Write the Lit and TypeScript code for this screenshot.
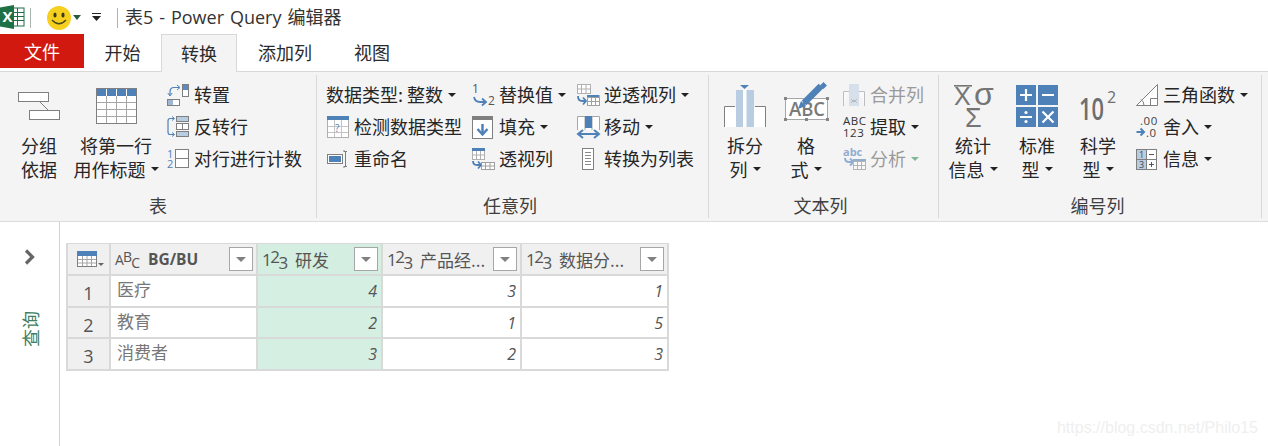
import { LitElement, html, css, svg } from "lit";
import { customElement } from "lit/decorators.js";

const B = "#4e81b8";
const LB = "#b9cde2";
const G = "#7f7f7f";
const ic = (w: number, h: number, body: unknown) =>
  html`<svg width=${w} height=${h} viewBox="0 0 ${w} ${h}">${body}</svg>`;

const icons = {
  group: ic(42, 28, svg`<g fill="#fff" stroke="${G}"><rect x=".5" y=".5" width="30" height="9"/><rect x="11.500" y="18.500" width="30" height="9"/></g><path d="M22 10l8 8" stroke="${G}"/>`),
  table: ic(41, 36, svg`<rect x=".5" y=".5" width="40" height="35" fill="#fff" stroke="${G}"/><rect x="1" y="1" width="39" height="7" fill="${B}"/><path d="M10.500 1v34M20.500 1v34M30.500 1v34M1 14.500h39M1 21.500h39M1 28.500h39" stroke="#a6a6a6" fill="none"/><path d="M10.500 1v7M20.500 1v7M30.500 1v7" stroke="#fff"/>`),
  transpose: ic(22, 22, svg`<rect x="15.500" y=".5" width="6" height="12" fill="#fff" stroke="${G}"/><rect x="16" y="1" width="5" height="5" fill="#5d8bbd"/><rect x=".5" y="15.500" width="12" height="6" fill="#fff" stroke="${G}"/><rect x="1" y="16" width="5" height="5" fill="#9cb6d3"/><path d="M12 3.500H7Q3 3.500 3 8v3" fill="none" stroke="${B}" stroke-width="1.200"/><path d="M10 1l3 2.500-3 2.500M.8 9l2.200 3 2.200-3" fill="none" stroke="${B}"/>`),
  flip: ic(22, 22, svg`<rect x="9.500" y=".5" width="12" height="5" fill="${LB}" stroke="${G}"/><rect x="9.500" y="7.500" width="12" height="6" fill="#fff" stroke="${G}"/><path d="M15.500 7.500v6" stroke="${G}"/><rect x="9.500" y="15.500" width="12" height="5" fill="${LB}" stroke="${G}"/><path d="M7 2.500H3Q1 2.500 1 5v11q0 2.500 2 2.500h4" fill="none" stroke="${B}" stroke-width="1.200"/><path d="M5 .5l2.500 2-2.500 2M5 16.500l2.500 2-2.500 2" fill="none" stroke="${B}"/>`),
  count: ic(22, 20, svg`<text x="0" y="9" class="s" fill="${B}">1</text><text x="0" y="19" class="s" fill="${B}">2</text><rect x="8.500" y=".5" width="13" height="18" fill="#fff" stroke="${G}"/><path d="M8.500 9.500h13" stroke="${G}"/>`),
  detect: ic(22, 22, svg`<rect x=".5" y=".5" width="21" height="21" fill="#fff" stroke="#b0b0b0"/><rect width="22" height="4" fill="${B}"/><path d="M7.500 4v17M14.500 4v17M1 10.500h20M1 16.500h20" stroke="#c4c4c4"/><text x="8" y="16" class="s q" fill="${B}">?</text>`),
  rename: ic(21, 18, svg`<rect x=".5" y="4.500" width="15" height="9" fill="#fff" stroke="${G}"/><rect x="2" y="6" width="12" height="6" fill="${B}"/><path d="M17 1.500h3M18.500 1.500v15M17 16.500h3" stroke="${G}" fill="none"/><path d="M16 1h2M16 17h2" stroke="${G}"/>`),
  replace: ic(23, 22, svg`<text x="0" y="9" class="m" fill="#555">1</text><text x="16" y="21" class="m" fill="#555">2</text><path d="M2 13q1 5 6 5h5" fill="none" stroke="${B}" stroke-width="1.800"/><path d="M10 14.500l4 3.500-4 3.500" fill="none" stroke="${B}" stroke-width="1.800"/>`),
  fill: ic(21, 23, svg`<rect x=".5" y="2" width="20" height="20.500" fill="#fff" stroke="${G}"/><rect width="21" height="4" fill="${G}"/><path d="M10.500 8v10" stroke="${B}" stroke-width="2.500"/><path d="M5.500 13l5 5.500 5-5.500" fill="none" stroke="${B}" stroke-width="2.500"/>`),
  unpivot: ic(23, 22, svg`<g stroke="#b0b0b0" fill="#fff"><rect x=".5" y=".5" width="13" height="9"/><path d="M4.500 .5v9M9 .5v9M.5 5h13" fill="none"/></g><rect x="10" y="11" width="12.500" height="3" fill="${B}"/><g stroke="#a0a0a0" fill="#fff"><rect x="10.500" y="13.500" width="12" height="8"/><path d="M14.500 13.500v8M18.500 13.500v8M10.500 17.500h12" fill="none"/></g><path d="M1 12q0 5 4 5h3" fill="none" stroke="${B}" stroke-width="1.800"/><path d="M6 13.500l3 3.500-3 3.500" fill="none" stroke="${B}" stroke-width="1.800"/>`),
  pivot: ic(23, 22, svg`<g stroke="#b0b0b0" fill="#fff"><rect x=".5" y=".5" width="12" height="11"/><path d="M4.500 3v9M8.500 3v9M.5 7h12" fill="none"/></g><rect x="0" y="0" width="13" height="3" fill="${B}"/><g stroke="#a0a0a0" fill="#fff"><rect x="9.500" y="14.500" width="13" height="7"/><path d="M13.500 14.500v7M18 14.500v7M9.500 18h13" fill="none"/></g><path d="M1 13q0 4 4 4h3" fill="none" stroke="${B}" stroke-width="1.800"/><path d="M6 13.500l3 3.500-3 3.500" fill="none" stroke="${B}" stroke-width="1.800"/>`),
  move: ic(23, 22, svg`<path d="M.5 14V.5h22V14" fill="#fff" stroke="#a6a6a6"/><path d="M8 .5V14M15 .5V14" stroke="#a6a6a6"/><rect x="8" width="7" height="12" fill="${B}"/><path d="M2 18h19" stroke="${B}" stroke-width="2"/><path d="M6 14l-5 4 5 4M17 14l5 4-5 4" fill="none" stroke="${B}" stroke-width="2"/>`),
  list: ic(22, 22, svg`<rect x="5.500" y=".5" width="11" height="21" fill="#fff" stroke="${G}"/><path d="M8 4.500h6M8 7.500h6M8 10.500h6M8 13.500h6M8 16.500h6" stroke="#8a8a8a"/>`),
  split: ic(42, 42, svg`<path d="M.5 42V21.500H11M31 21.500h10.500V42" fill="#fff" stroke="${G}"/><rect x="1" y="22" width="11" height="20" fill="#fff"/><rect x="30" y="22" width="11" height="20" fill="#fff"/><rect x="12" y="5" width="18" height="37" fill="${LB}"/><rect x="19" y="5" width="3.500" height="37" fill="#fff"/><path d="M16 0h9l-4.500 4z" fill="${B}"/>`),
  format: ic(45, 46, svg`<rect x="1.500" y="15.500" width="42" height="21" fill="#fff" stroke="#a6a6a6"/><g fill="#858585"><rect y="14" width="3" height="3"/><rect x="42" y="14" width="3" height="3"/><rect y="35" width="3" height="3"/><rect x="42" y="35" width="3" height="3"/><rect x="21" y="35" width="3" height="3"/></g><text x="5" y="33" class="abc" textLength="36" lengthAdjust="spacingAndGlyphs">ABC</text><path d="M20 20L37 3" stroke="${B}" stroke-width="6.500"/><path d="M39.500 .5l2 2-2 2-2-2z" fill="${B}" stroke="${B}" stroke-width="2"/><path d="M14 26l3-8 5 5z" fill="${B}"/>`),
  merge: ic(22, 22, svg`<g opacity=".5"><path d="M.5 22V7.500H6M16 7.500h5.500V22" fill="#fff" stroke="#8a8a8a"/><rect x="6" y="0" width="10" height="22" fill="${LB}"/><path d="M8 15l3 3 3-3M8 19l3-3 3 3" fill="none" stroke="#7f7f7f"/></g>`),
  extract: ic(22, 24, svg`<text x="0" y="10" class="x">ABC</text><text x="0" y="22" class="x">123</text>`),
  parse: ic(23, 24, svg`<g opacity=".6"><text x="0" y="9" class="p" fill="${B}">abc</text><path d="M2 11q0 4 4 4h3" fill="none" stroke="${B}" stroke-width="2"/><path d="M7 11.500l3.500 3.500-3.500 3.500" fill="none" stroke="${B}" stroke-width="2"/><rect x="10" y="12" width="13" height="3" fill="${B}"/><g fill="#fff" stroke="#8a8a8a"><rect x="10.500" y="14.500" width="12" height="8"/><path d="M14.500 14.500v8M18.500 14.500v8M10.500 18.500h12" fill="none"/></g></g>`),
  stats: ic(40, 42, svg`<path d="M1 .8h18" stroke="#757575" stroke-width="1.600"/><text x="1" y="20" class="st">X</text><text x="21" y="20" class="sig">σ</text><text x="12" y="42" class="sg">Σ</text>`),
  std: ic(42, 42, svg`<rect width="20" height="20" fill="${B}"/><rect x="22" width="20" height="20" fill="${B}"/><rect y="22" width="20" height="20" fill="${B}"/><rect x="22" y="22" width="20" height="20" fill="${B}"/><g stroke="#fff" stroke-width="2.200"><path d="M4 10h12M10 4v12M26 10h12M4 32h12"/><path d="M26.500 26.500l11 11M37.500 26.500l-11 11"/></g><circle cx="10" cy="27.500" r="1.600" fill="#fff"/><circle cx="10" cy="36.500" r="1.600" fill="#fff"/>`),
  sci: ic(38, 30, svg`<text x="0" y="29" class="ten" textLength="25" lengthAdjust="spacingAndGlyphs">10</text><text x="28" y="12" class="two">2</text>`),
  trig: ic(22, 22, svg`<path d="M.5 21.500L21.500 .5v21z" fill="#fff" stroke="${G}"/><path d="M14.500 21.500v-7h7M8 21.500q0-4-3-6" fill="none" stroke="${G}"/>`),
  round: ic(22, 22, svg`<text x="4" y="9" class="r">.00</text><text x="10" y="21" class="r">.0</text><path d="M.5 16h7" stroke="${B}" stroke-width="2"/><path d="M4.500 12.500L8 16l-3.500 3.500" fill="none" stroke="${B}" stroke-width="2"/>`),
  info: ic(21, 21, svg`<rect x=".5" y=".5" width="20" height="20" fill="#fff" stroke="${G}"/><rect x="1" y="1" width="9" height="19" fill="${LB}"/><path d="M10.500 1v19M1 10.500h19" stroke="${G}"/><text x="3" y="9" class="i">1</text><text x="3" y="19" class="i">3</text><path d="M13 5.500h5M13 15.500h5M15.500 13v5" stroke="#555"/>`),
  excel: html`<svg width="25" height="24" viewBox="0 0 25 24"><rect x="12" y="3" width="12" height="18" fill="#fff" stroke="#1e7145"/><path d="M12 7.500h12M12 11.500h12M12 15.500h12M17.500 3v18" stroke="#1e7145"/><path d="M0 2.500L14 0v24L0 21.500z" fill="#1e7145"/><text x="2.500" y="17" class="xl">X</text></svg>`,
  smile: html`<svg width="24" height="24" viewBox="0 0 24 24"><circle cx="12" cy="12" r="12" fill="#f7cf1f"/><ellipse cx="8" cy="9" rx="1.600" ry="2.500" fill="#3a3a1a"/><ellipse cx="16" cy="9" rx="1.600" ry="2.500" fill="#3a3a1a"/><path d="M5 14q7 7.500 14 0" fill="none" stroke="#4a4a1a" stroke-width="1.300"/></svg>`,
  qat: html`<svg width="9" height="8" viewBox="0 0 9 8"><path d="M0 .5h9" stroke="#222"/><path d="M0 3h9L4.500 8z" fill="#222"/></svg>`,
  chevron: html`<svg width="12" height="16" viewBox="0 0 12 16"><path d="M2 1.500L8.500 8 2 14.500" fill="none" stroke="#666" stroke-width="3.200"/></svg>`,
  tableMenu: html`<svg width="28" height="17" viewBox="0 0 28 17"><rect x=".5" y=".5" width="19" height="15" fill="#fff" stroke="${G}"/><rect width="20" height="5" fill="${B}"/><path d="M5.500 5v10M10 5v10M14.500 5v10M1 8.500h18M1 12h18" stroke="#a6a6a6"/><path d="M21 12h6l-3 3z" fill="#666"/></svg>`,
};

const caret = html`<i class="caret"></i>`;

const big = (cls: string, icon: unknown, l1: string, l2: string, drop = false) => html`
  <div class="big ${cls}">
    <div class="big-ic">${icon}</div>
    <div class="ln">${l1}</div>
    <div class="ln">${l2}${drop ? caret : ""}</div>
  </div>`;

const row = (icon: unknown, text: string, drop = false, off = false) => html`
  <div class="row ${off ? "off" : ""}">
    ${icon ? html`<span class="slot">${icon}</span>` : ""}<span class="tx">${text}</span>${drop ? caret : ""}
  </div>`;

const typeAbc = html`<span class="ty"><span>A</span><span class="up">B</span><span class="dn">C</span></span>`;
const type123 = html`<span class="ty num"><span>1</span><span class="up">2</span><span class="dn">3</span></span>`;

const rows = [
  ["医疗", 4, 3, 1],
  ["教育", 2, 1, 5],
  ["消费者", 3, 2, 3],
];

@customElement("app-root")
export class AppRoot extends LitElement {
  static styles = css`
    :host { display: block; width: 1268px; height: 446px; overflow: hidden; background: #fff; position: relative;
      font-family: "Noto Sans CJK SC", sans-serif; font-size: 18px; color: #262626; }
    svg { overflow: visible; }
    .title { height: 34px; display: flex; align-items: center; }
    .title svg { display: block; flex: none; }
    .vsep { width: 1px; height: 20px; background: #a9b5ad; }
    .vs1 { margin: 2px 16px 0 5px; }
    .smile { margin-top: 1px; }
    .dk { width: 0; height: 0; border: 4px solid transparent; border-top: 5px solid #2a5a40; border-bottom: 0; margin: 0 11px 0 2px; }
    .vs2 { margin: 2px 7px 0 16px; }
    .ttl { font-family: "Open Sans", "Noto Sans CJK SC", sans-serif; font-size: 18px; line-height: 34px; color: #333; white-space: pre; word-spacing: 1.250px; }

    .tabs { height: 37px; display: flex; border-bottom: 1px solid #d8d8d8; }
    .tab { line-height: 36px; padding: 0 21px; color: #2b2b2b; }
    .file { background: #d2190f; color: #fff; width: 84px; height: 34px; box-sizing: border-box; padding: 0; text-align: center; line-height: 34px; }
    .tab.t1 { width: 77px; box-sizing: border-box; text-align: center; padding: 0; }
    .tab.active { width: 76px; box-sizing: border-box; text-align: center; padding: 0; height: 38px; background: #f5f4f5; border: 1px solid #d8d8d8; border-bottom: 0; }

    .ribbon { height: 146px; background: #f5f4f5; border-bottom: 1px solid #dcdcdc; display: flex; padding-top: 3px; }
    .grp { height: 143px; box-sizing: border-box; border-right: 1px solid #d9d9d9; display: flex; flex-direction: column; flex: none; }
    .g1 { width: 317px; } .g2 { width: 392px; } .g3 { width: 230px; } .g4 { width: 323px; }
    .body { flex: 1; display: flex; padding-top: 4px; }
    .lbl { height: 24px; line-height: 24px; text-align: center; color: #404040; margin-bottom: 1px; }
    .g2 .lbl { padding-right: 5px; } .g3 .lbl { padding-right: 6px; } .g4 .lbl { padding-right: 5px; }
    .big { display: flex; flex-direction: column; align-items: center; flex: none; white-space: nowrap; }
    .big-ic { height: 54px; display: flex; align-items: center; }
    .big-ic svg, .slot svg { display: block; }
    .ln { height: 24px; line-height: 24px; display: flex; align-items: center; }
    .w-g { width: 50px; margin-left: 14px; } .w-t { width: 100px; margin-left: 2px; }
    .w-s { width: 72px; } .w-f { width: 50px; }
    .w-x { width: 68px; } .w-d { width: 60px; } .w-c { width: 62px; }
    .col { display: flex; flex-direction: column; flex: none; }
    .c1 { width: 145px; margin-left: 9px; } .c2 { width: 105px; } .c3 { width: 120px; }
    .c-t { margin-left: 11px; } .c-n { margin-left: 6px; }
    .row { height: 32px; display: flex; align-items: center; white-space: nowrap; }
    .tx { margin-bottom: 3px; }
    .slot { width: 28px; flex: none; padding-left: 1px; box-sizing: border-box; }
    .off { color: #9a9a9a; }
    .off .caret { border-top-color: #7fb79b; }
    .caret { display: inline-block; width: 0; height: 0; border: 4px solid transparent; border-top: 4px solid #222; border-bottom: 0; margin-left: 5px; flex: none; }

    .main { display: flex; height: 224px; }
    .side { width: 59px; flex: none; border-right: 1px solid #d4d4d4; display: flex; flex-direction: column; align-items: center; padding-top: 27px; }
    .side svg { display: block; }
    .vtext { writing-mode: vertical-rl; text-orientation: sideways; transform: rotate(180deg); color: #3f7f5f; font-size: 18px; line-height: 20px; margin-top: 46px; }
    .content { padding: 21px 0 0 6px; }
    .grid { display: grid; grid-template-columns: 41px 145px 123px 137px 145px; grid-template-rows: 30px 30px 29px 30px; gap: 2px; padding: 1px 2px 2px 2px; background: #d9d9d9; }
    .h { background: #f0f0f0; display: flex; align-items: center; color: #555; padding-left: 4px; font-size: 17px; white-space: nowrap; position: relative; }
    .h.sel { background: #d4efe1; }
    .h.corner { padding-left: 9px; }
    .h.corner svg { display: block; }
    .ty { font-family: "Open Sans", sans-serif; font-size: 14px; letter-spacing: -.8px; width: 33px; flex: none; display: inline-flex; align-items: center; color: #555; }
    .ty.num { font-size: 17px; letter-spacing: -1.500px; }
    .up { position: relative; top: -3px; }
    .dn { position: relative; top: 3px; }
    .hb { font-family: "Open Sans", sans-serif; font-weight: 700; font-size: 15.500px; }
    .flt { position: absolute; right: 3px; top: 3px; width: 24px; height: 24px; box-sizing: border-box; background: #fff; border: 1px solid #a6a6a6; display: flex; align-items: center; justify-content: center; }
    .flt::after { content: ""; border: 5px solid transparent; border-top: 5px solid #808080; border-bottom: 0; }
    .idx { background: #f0f0f0; display: flex; align-items: center; justify-content: center; font-family: "Open Sans", sans-serif; font-size: 18px; color: #555; padding-top: 4px; box-sizing: border-box; }
    .c { background: #fff; display: flex; align-items: center; color: #777; font-size: 17px; padding-left: 6px; line-height: 1; padding-bottom: 5px; box-sizing: border-box; }
    .n { background: #fff; display: flex; align-items: center; justify-content: flex-end; padding-right: 4px; font-family: "Open Sans", sans-serif; font-style: italic; font-size: 16px; color: #555; }
    .n.sel { background: #d5f0e2; }
    .wm { position: absolute; right: 10px; bottom: 9px; font-family: "Liberation Sans", sans-serif; font-size: 16px; color: #efefef; }
  `;

  render() {
    const i = icons;
    return html`
      <style>
        svg text { font-family: "Open Sans", sans-serif; white-space: pre; }
        svg .s { font-size: 11px; }
        svg .q { font-size: 10px; }
        svg .m { font-size: 12px; }
        svg .abc { font-size: 20px; font-weight: 600; fill: #7a7a7a; }
        svg .x { font-size: 11.500px; fill: #333; letter-spacing: .5px; }
        svg .p { font-size: 11px; font-weight: 700; }
        svg .st { font-size: 25px; fill: #757575; font-family: "Liberation Sans", sans-serif; }
        svg .sig { font-size: 32px; fill: #757575; font-family: "Liberation Sans", sans-serif; }
        svg .sg { font-size: 27px; fill: #757575; font-family: "Liberation Sans", sans-serif; }
        svg .ten { font-size: 30px; fill: #6e6e6e; font-weight: 600; }
        svg .two { font-size: 16px; fill: #6e6e6e; }
        svg .r { font-size: 11.500px; fill: #444; letter-spacing: .6px; }
        svg .i { font-size: 9px; fill: #444; }
        svg .xl { font-size: 15px; fill: #fff; font-weight: 700; }
      </style>
      <div class="title">
        <span>${i.excel}</span>
        <span class="vsep vs1"></span>
        <span class="smile">${i.smile}</span>
        <span class="dk"></span>
        ${i.qat}
        <span class="vsep vs2"></span>
        <span class="ttl">表5 - Power Query 编辑器</span>
      </div>
      <div class="tabs">
        <div class="tab file">文件</div>
        <div class="tab t1">开始</div>
        <div class="tab active">转换</div>
        <div class="tab">添加列</div>
        <div class="tab">视图</div>
      </div>
      <div class="ribbon">
        <div class="grp g1">
          <div class="body">
            ${big("w-g", i.group, "分组", "依据")}
            ${big("w-t", i.table, "将第一行", "用作标题", true)}
            <div class="col">
              ${row(i.transpose, "转置")}
              ${row(i.flip, "反转行")}
              ${row(i.count, "对行进行计数")}
            </div>
          </div>
          <div class="lbl">表</div>
        </div>
        <div class="grp g2">
          <div class="body">
            <div class="col c1">
              ${row(null, "数据类型: 整数", true)}
              ${row(i.detect, "检测数据类型")}
              ${row(i.rename, "重命名")}
            </div>
            <div class="col c2">
              ${row(i.replace, "替换值", true)}
              ${row(i.fill, "填充", true)}
              ${row(i.pivot, "透视列")}
            </div>
            <div class="col c3">
              ${row(i.unpivot, "逆透视列", true)}
              ${row(i.move, "移动", true)}
              ${row(i.list, "转换为列表")}
            </div>
          </div>
          <div class="lbl">任意列</div>
        </div>
        <div class="grp g3">
          <div class="body">
            ${big("w-s", i.split, "拆分", "列", true)}
            ${big("w-f", i.format, "格", "式", true)}
            <div class="col c-t">
              ${row(i.merge, "合并列", false, true)}
              ${row(i.extract, "提取", true)}
              ${row(i.parse, "分析", true, true)}
            </div>
          </div>
          <div class="lbl">文本列</div>
        </div>
        <div class="grp g4">
          <div class="body">
            ${big("w-x", i.stats, "统计", "信息", true)}
            ${big("w-d", i.std, "标准", "型", true)}
            ${big("w-c", i.sci, "科学", "型", true)}
            <div class="col c-n">
              ${row(i.trig, "三角函数", true)}
              ${row(i.round, "舍入", true)}
              ${row(i.info, "信息", true)}
            </div>
          </div>
          <div class="lbl">编号列</div>
        </div>
      </div>
      <div class="main">
        <div class="side">
          ${i.chevron}
          <div class="vtext">查询</div>
        </div>
        <div class="content">
          <div class="grid">
            <div class="h corner">${i.tableMenu}</div>
            <div class="h">${typeAbc}<span class="hb">BG/BU</span><i class="flt"></i></div>
            <div class="h sel">${type123}<span>研发</span><i class="flt"></i></div>
            <div class="h">${type123}<span>产品经...</span><i class="flt"></i></div>
            <div class="h">${type123}<span>数据分...</span><i class="flt"></i></div>
            ${rows.map((r, k) => html`
              <div class="idx">${k + 1}</div>
              <div class="c">${r[0]}</div>
              <div class="n sel">${r[1]}</div>
              <div class="n">${r[2]}</div>
              <div class="n">${r[3]}</div>`)}
          </div>
        </div>
      </div>
      <div class="wm">https://blog.csdn.net/Philo15</div>
    `;
  }
}
